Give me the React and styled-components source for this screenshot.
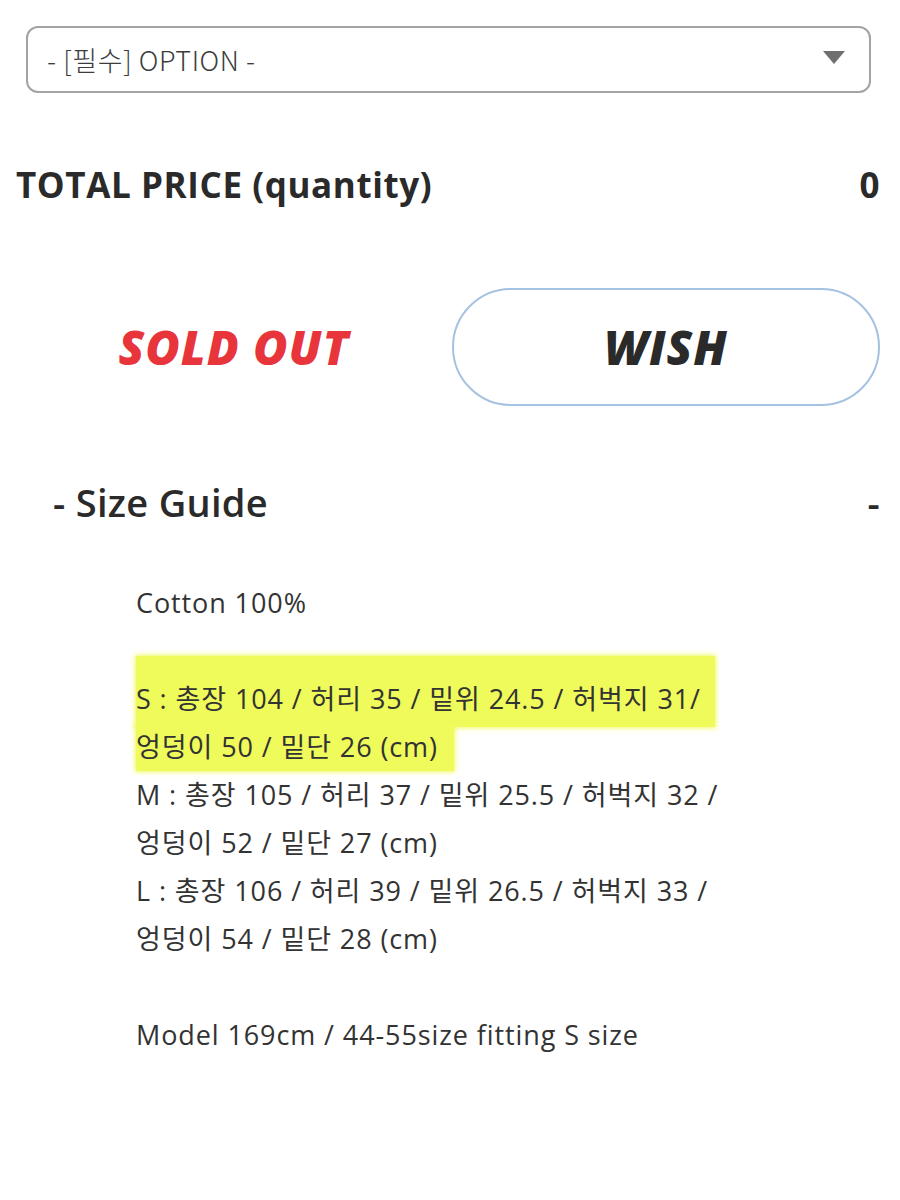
import styled, { createGlobalStyle } from 'styled-components';

const GlobalStyle = createGlobalStyle`
  body {
    margin: 0;
    background: #fff;
    font-family: "Open Sans", "Noto Sans CJK KR", sans-serif;
    color: #2b2b2b;
  }
`;

const Page = styled.div`
  width: 900px;
  height: 1200px;
  box-sizing: border-box;
  padding: 26px 20px 0 16px;
`;

const Select = styled.div`
  margin-left: 10px;
  width: 845px;
  height: 67px;
  box-sizing: border-box;
  border: 2px solid #a3a3a3;
  border-radius: 12px;
  display: flex;
  align-items: center;
  justify-content: space-between;
  padding: 0 24px 0 19px;
  font-family: "Noto Sans CJK KR", sans-serif;
  font-weight: 300;
  font-size: 27px;
  letter-spacing: 0.6px;
  color: #3c3c3c;
`;

const Arrow = styled.span`
  width: 0;
  height: 0;
  border-left: 11px solid transparent;
  border-right: 11px solid transparent;
  border-top: 13px solid #6f6f6f;
  margin-top: -4px;
`;

const PriceRow = styled.div`
  margin-top: 68px;
  display: flex;
  justify-content: space-between;
  align-items: center;
  font-weight: 700;
  font-size: 35px;
  letter-spacing: 0.6px;
  color: #2a2a2a;
`;

const ButtonRow = styled.div`
  margin-top: 80px;
  display: flex;
  align-items: center;
`;

const SoldOut = styled.div`
  flex: 0 0 436px;
  text-align: center;
  font-weight: 800;
  font-style: italic;
  font-size: 47px;
  letter-spacing: 1px;
  color: #e8343b;
`;

const WishButton = styled.button`
  width: 429px;
  height: 118px;
  box-sizing: border-box;
  border: 2px solid #a5c2e2;
  border-radius: 60px;
  background: #fff;
  font-family: "Open Sans", sans-serif;
  font-weight: 800;
  font-style: italic;
  font-size: 47px;
  letter-spacing: 1px;
  color: #2a2a2a;
`;

const GuideHeader = styled.div`
  margin-top: 70px;
  padding-left: 37px;
  display: flex;
  justify-content: space-between;
  align-items: center;
  font-weight: 600;
  font-size: 38px;
  letter-spacing: 0.3px;
  color: #2a2a2a;
`;

const GuideBody = styled.div`
  margin-top: 51px;
  padding-left: 120px;
  font-family: "Open Sans", "Noto Sans CJK KR", sans-serif;
  font-size: 27px;
  letter-spacing: 0.9px;
  line-height: 48px;
  color: #333;
`;

const Gap = styled.div`
  height: ${p => p.lines * 48}px;
`;

const Mark = styled.span`
  background: #effa5b;
  box-shadow: 0 0 5px 1px #effa5b;
  padding: ${p => p.top}px ${p => p.right}px ${p => p.bottom}px 0;
  box-decoration-break: clone;
  -webkit-box-decoration-break: clone;
`;

export default function App() {
  return (
    <Page>
      <GlobalStyle />
      <Select>
        <span>- [필수] OPTION -</span>
        <Arrow />
      </Select>
      <PriceRow>
        <span>TOTAL PRICE (quantity)</span>
        <span>0</span>
      </PriceRow>
      <ButtonRow>
        <SoldOut>SOLD OUT</SoldOut>
        <WishButton>WISH</WishButton>
      </ButtonRow>
      <GuideHeader>
        <span>- Size Guide</span>
        <span>-</span>
      </GuideHeader>
      <GuideBody>
        <div>Cotton 100%</div>
        <Gap lines={1} />
        <div><Mark top={24} right={14} bottom={10}>S : 총장 104 / 허리 35 / 밑위 24.5 / 허벅지 31/</Mark></div>
        <div><Mark top={4} right={16} bottom={6}>엉덩이 50 / 밑단 26 (cm)</Mark></div>
        <div>M : 총장 105 / 허리 37 / 밑위 25.5 / 허벅지 32 /</div>
        <div>엉덩이 52 / 밑단 27 (cm)</div>
        <div>L : 총장 106 / 허리 39 / 밑위 26.5 / 허벅지 33 /</div>
        <div>엉덩이 54 / 밑단 28 (cm)</div>
        <Gap lines={1} />
        <div>Model 169cm / 44-55size fitting S size</div>
      </GuideBody>
    </Page>
  );
}
